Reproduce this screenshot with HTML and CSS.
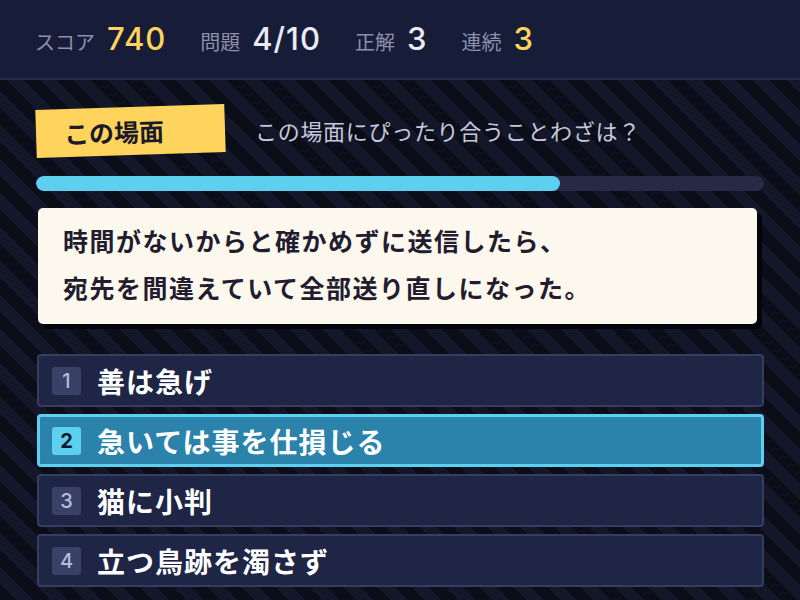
FILE: index.html
```html
<!DOCTYPE html>
<html lang="ja">
<head>
    <meta charset="UTF-8" />
    <title>ことわざクイズ</title>
    <meta name="viewport" content="width=device-width, initial-scale=1">
    <link rel="stylesheet" href="styles.css">
</head>
<body>

<header class="topbar">
  <div class="stat"><span class="stat-label">スコア</span><span class="stat-value gold">740</span></div>
  <div class="stat"><span class="stat-label">問題</span><span class="stat-value">4/10</span></div>
  <div class="stat"><span class="stat-label">正解</span><span class="stat-value">3</span></div>
  <div class="stat"><span class="stat-label">連続</span><span class="stat-value gold">3</span></div>
</header>

<main class="stage">
  <div class="prompt">
    <div class="tag">この場面</div>
    <p class="question">この場面にぴったり合うことわざは？</p>
  </div>

  <div class="progress"><div class="progress-fill" style="width: 72%"></div></div>

  <div class="scene">
    時間がないからと確かめずに送信したら、<br>
    宛先を間違えていて全部送り直しになった。
  </div>

  <ul class="choices">
    <li class="choice"><span class="num">1</span><span class="choice-text">善は急げ</span></li>
    <li class="choice selected"><span class="num">2</span><span class="choice-text">急いては事を仕損じる</span></li>
    <li class="choice"><span class="num">3</span><span class="choice-text">猫に小判</span></li>
    <li class="choice"><span class="num">4</span><span class="choice-text">立つ鳥跡を濁さず</span></li>
  </ul>
</main>

</body>
</html>
```

FILE: styles.css
```css
* {
  box-sizing: border-box;
}

body {
  margin: 0;
  width: 800px;
  height: 600px;
  overflow: hidden;
  font-family: Inter, "Noto Sans CJK JP", sans-serif;
  background: #0b0d18;
}

/* Score bar */
.topbar {
  height: 80px;
  background-color: #171d38;
  border-bottom: 2px solid #252c4a;
  display: flex;
  align-items: baseline;
  padding: 20px 0 0 35px;
}

.stat {
  display: flex;
  align-items: baseline;
  gap: 12px;
  margin-right: 34px;
}

.stat-label {
  font-size: 20px;
  color: #8b91ad;
}

.stat-value {
  font-size: 31px;
  font-weight: 500;
  letter-spacing: 1px;
  color: #e8ebf5;
}

.gold {
  color: #ffd45a;
}

/* Play area with stripes */
.stage {
  height: 520px;
  padding: 24px 36px 0 36px;
  background: repeating-linear-gradient(45deg, #0b0d18 0 12px, #141729 12px 24px);
}

.prompt {
  display: flex;
  align-items: center;
  gap: 30px;
  height: 54px;
}

.tag {
  width: 189px;
  height: 48px;
  background-color: #ffd45c;
  color: #1a1a28;
  font-size: 25px;
  font-weight: 700;
  padding-left: 28px;
  display: flex;
  align-items: center;
  transform: rotate(-1.8deg);
}

.question {
  margin: 0 0 3px 0;
  font-size: 22px;
  letter-spacing: 0.7px;
  color: #c5c9dc;
}

.progress {
  margin-top: 18px;
  height: 15px;
  border-radius: 8px;
  background-color: #262a45;
  overflow: hidden;
}

.progress-fill {
  height: 100%;
  border-radius: 8px;
  background-color: #5dd0f0;
}

.scene {
  margin: 17px 7px 0 2px;
  height: 116px;
  padding: 11px 20px 8px 25px;
  background-color: #fcf8ee;
  border-radius: 5px;
  box-shadow: 5px 5px 0 #04050c;
  color: #221c2e;
  font-size: 25px;
  font-weight: 700;
  line-height: 47px;
  letter-spacing: 1.5px;
}

/* Answers */
.choices {
  list-style-type: none;
  margin: 30px 0 0 1px;
  padding: 0;
  display: flex;
  flex-direction: column;
  gap: 7px;
}

.choice {
  height: 53px;
  display: flex;
  align-items: center;
  gap: 16px;
  padding-left: 13px;
  background-color: #1e2545;
  border: 2px solid #363d5e;
  border-radius: 4px;
}

.choice.selected {
  background-color: #2b82ab;
  border: 3px solid #5dd0f0;
  padding-left: 12px;
}

.num {
  width: 29px;
  height: 28px;
  border-radius: 3px;
  background-color: #3a4167;
  color: #b4bbdc;
  font-size: 20px;
  font-weight: 500;
  display: flex;
  align-items: center;
  justify-content: center;
}

.selected .num {
  background-color: #5dd0f0;
  color: #0b1a30;
  font-weight: 700;
}

.choice-text {
  color: #ffffff;
  font-size: 28px;
  font-weight: 700;
  letter-spacing: 1px;
}
```
